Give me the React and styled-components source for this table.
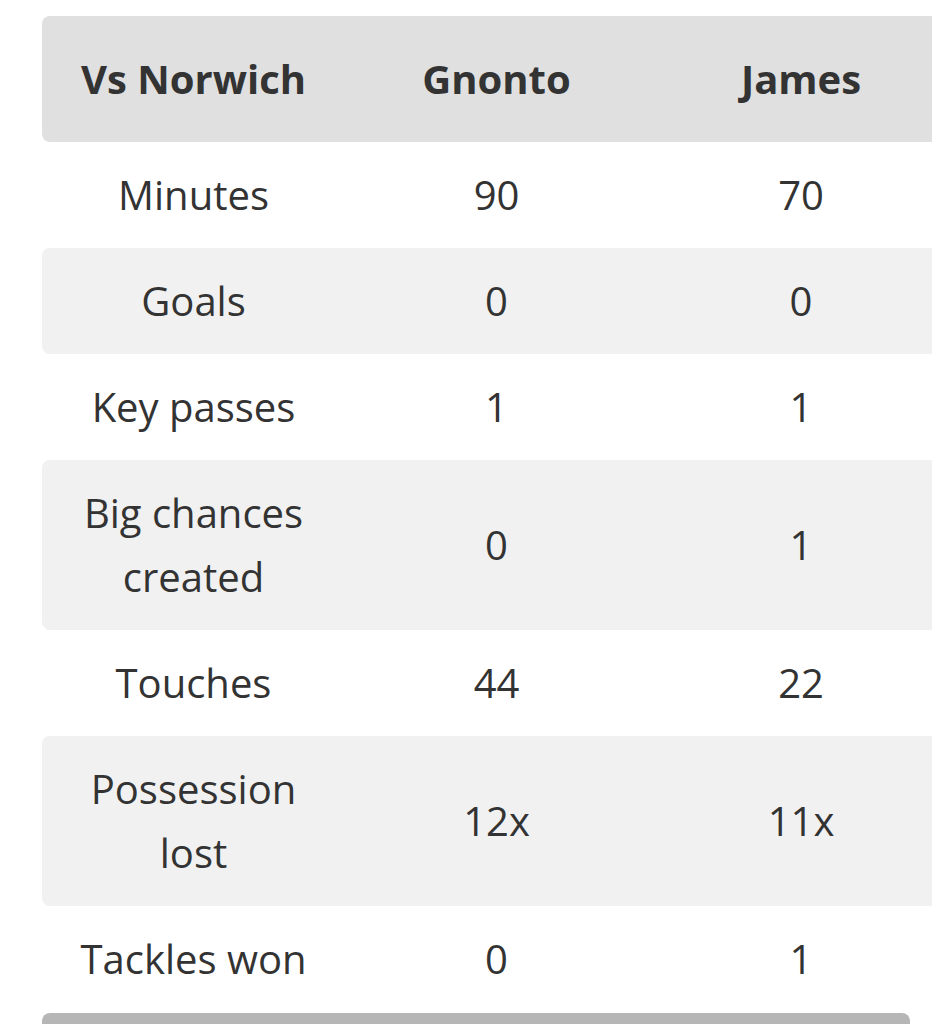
import React from 'react';
import styled, { createGlobalStyle } from 'styled-components';

const GlobalStyle = createGlobalStyle`
  body {
    margin: 0;
    background: #ffffff;
    font-family: 'Open Sans', 'Noto Sans', sans-serif;
    color: #333333;
  }
`;

// Styling Page

const Page = styled.div`
  padding: 16px 0 0 42px;
  width: 890px;
`;

// Styling Scroller (clips the wide table)

const Scroller = styled.div`
  width: 890px;
  overflow: hidden;
`;

// Styling Table

const Table = styled.div`
  width: 912px;
  display: flex;
  flex-direction: column;
`;

// Styling Row

const Row = styled.div`
  display: grid;
  grid-template-columns: 303px 303px 306px;
  align-items: center;
  background: ${p => p.$head ? '#e0e0e0' : p.$shade ? '#f1f1f1' : '#ffffff'};
  border-radius: 8px;
  padding: ${p => p.$head ? '31px 0' : '21px 0'};
`;

// Styling Cell

const Cell = styled.div`
  text-align: center;
  font-size: 40px;
  line-height: 64px;
  font-weight: ${p => p.$head ? 700 : 400};
  color: #333333;
  padding: 0 24px;
`;

// Styling Scrollbar

const Track = styled.div`
  margin-top: 1px;
  height: 14px;
`;

const Thumb = styled.div`
  width: 868px;
  height: 100%;
  background: #b6b6b6;
  border-radius: 8px 8px 0 0;
`;

const rows = [
  ['Minutes', '90', '70'],
  ['Goals', '0', '0'],
  ['Key passes', '1', '1'],
  ['Big chances created', '0', '1'],
  ['Touches', '44', '22'],
  ['Possession lost', '12x', '11x'],
  ['Tackles won', '0', '1'],
];

const App = () => {
  return (
    <Page>
      <GlobalStyle />
      <Scroller>
        <Table>
          <Row $head>
            <Cell $head>Vs Norwich</Cell>
            <Cell $head>Gnonto</Cell>
            <Cell $head>James</Cell>
          </Row>
          {rows.map((r, i) => (
            <Row key={r[0]} $shade={i % 2 === 1}>
              <Cell>{r[0]}</Cell>
              <Cell>{r[1]}</Cell>
              <Cell>{r[2]}</Cell>
            </Row>
          ))}
        </Table>
      </Scroller>
      <Track>
        <Thumb />
      </Track>
    </Page>
  );
};

export default App;
